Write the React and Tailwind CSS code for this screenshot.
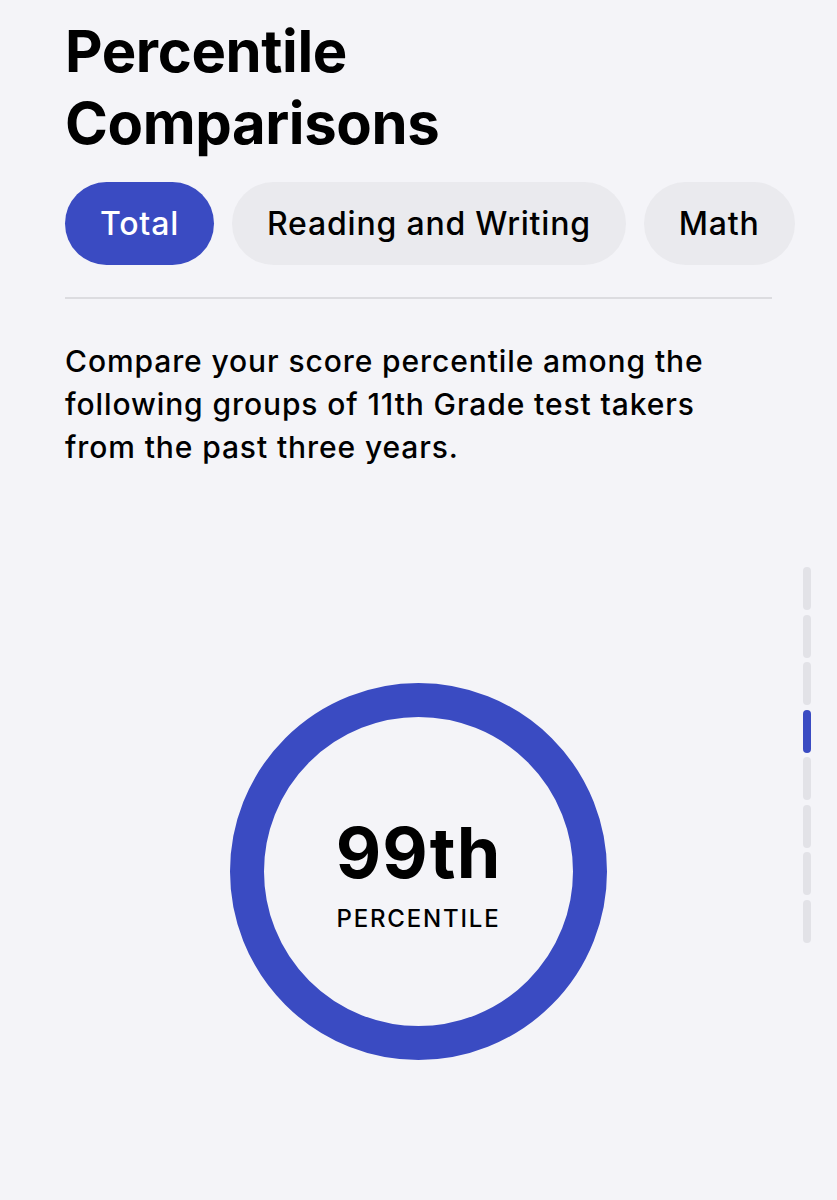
import React, { useState } from "react";

const tabs = ["Total", "Reading and Writing", "Math"];

const PageDots = ({ count, active }) => {
  return (
    <div className="absolute left-[803px] top-[567px] flex flex-col gap-[4.5px]">
      {Array.from({ length: count }).map((_, i) => (
        <div
          key={i}
          className={
            i === active
              ? "w-[8px] h-[43px] rounded-full bg-[#3a4bc2]"
              : "w-[8px] h-[43px] rounded-full bg-[#e2e2e7]"
          }
        />
      ))}
    </div>
  );
};

const App = () => {
  const [tab, setTab] = useState("Total");

  return (
    <div
      className="relative min-h-[1200px] w-[837px] overflow-hidden bg-[#f4f4f8] text-black"
      style={{ fontFamily: "Inter, 'Noto Sans', sans-serif" }}
    >
      <div className="px-[65px] pt-[15px]">
        {/* Title */}
        <h1 className="text-[58px] leading-[72px] font-bold tracking-[-0.4px]">
          Percentile
          <br />
          Comparisons
        </h1>

        {/* Tabs */}
        <div className="mt-[23px] flex gap-[18px] whitespace-nowrap">
          {tabs.map((t) => (
            <button
              key={t}
              onClick={() => setTab(t)}
              className={
                t === tab
                  ? "shrink-0 h-[83px] px-[35px] rounded-full bg-[#3a4bc2] text-white text-[32px] font-medium tracking-[0.8px]"
                  : "shrink-0 h-[83px] px-[35px] rounded-full bg-[#eaeaee] text-black text-[32px] font-medium tracking-[0.8px]"
              }
            >
              {t}
            </button>
          ))}
        </div>

        {/* Divider */}
        <div className="mt-[32px] h-[2px] bg-[#dcdce0]" />

        {/* Description */}
        <p className="mt-[41px] text-[30px] leading-[43px] font-medium tracking-[0.9px]">
          Compare your score percentile among the
          <br />
          following groups of 11th Grade test takers
          <br />
          from the past three years.
        </p>

        {/* Ring */}
        <div className="mt-[214px] flex justify-center">
          <div className="w-[377px] h-[377px] rounded-full border-[34px] border-[#3a4bc2] flex flex-col items-center justify-center pt-[7px]">
            <div className="text-[70px] leading-[66px] font-bold tracking-[1px]">99th</div>
            <div className="mt-[22px] text-[24px] leading-[22px] font-medium tracking-[1.8px]">
              PERCENTILE
            </div>
          </div>
        </div>
      </div>

      <PageDots count={8} active={3} />
    </div>
  );
};

export default App;
